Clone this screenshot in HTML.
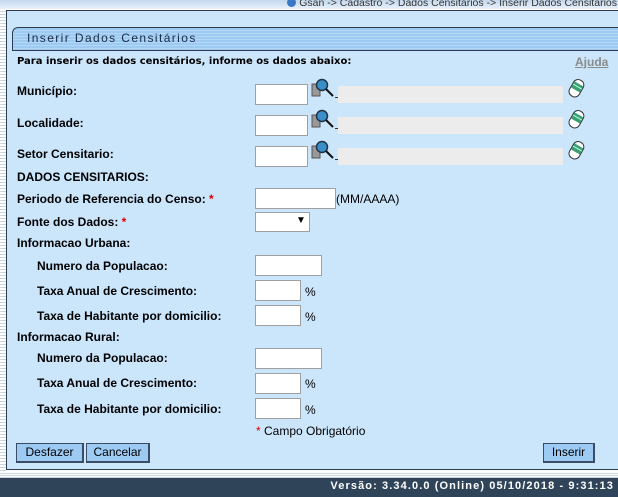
<!DOCTYPE html>
<html><head><meta charset="utf-8"><style>
*{margin:0;padding:0;box-sizing:border-box}
body{width:618px;height:497px;overflow:hidden;background:#fff;font-family:"Liberation Sans",Arial,sans-serif;font-size:12px;position:relative;color:#000}
.a{position:absolute;white-space:nowrap}
.lb{font-weight:bold;font-size:12px}
.in{position:absolute;background:#fff;border:1px solid #a0a0a0;height:21px}
.g{position:absolute;background:#ececec;height:17px}
.r{color:#d00}
.btn{position:absolute;top:443px;height:20px;background:#9ccaf3;border:1px solid #3a4c66;border-right-width:2px;border-bottom-width:2px;font-size:12px;text-align:center;line-height:17px}
</style></head><body>
<div class="a" style="left:0;top:0;width:618px;height:9px;background:linear-gradient(#c3d8ee,#e9f1fa)"></div>
<div class="a" style="left:0;top:9px;width:6px;height:462px;background:repeating-linear-gradient(#fff 0 2px,#c8d4e2 2px 3px)"></div>
<div class="a" style="right:1px;top:-3px;font-size:10.5px;color:#333"><span style="display:inline-block;width:9px;height:9px;border-radius:50%;background:#3a78c8;vertical-align:-1px"></span> Gsan -&gt; Cadastro -&gt; Dados Censitarios -&gt; Inserir Dados Censitarios</div>
<div class="a" style="left:6px;top:10px;width:614px;height:460px;background:#cbe5fb;border:1px solid #2e3c52"></div>
<div class="a" style="left:12px;top:27px;width:608px;height:24px;background:repeating-linear-gradient(#9dcaf2 0 2px,#b4d7f6 2px 3px);border:1px solid #2e3c52;border-radius:6px 0 0 0"></div>
<div class="a" style="left:27px;top:31px;font-size:12px;letter-spacing:1.4px;color:#1a2a44">Inserir Dados Censitários</div>
<div class="a lb" style="left:17px;top:56px;font-family:'DejaVu Sans',sans-serif;font-size:10px">Para inserir os dados censitários, informe os dados abaixo:</div>
<div class="a" style="left:575px;top:55px;font-weight:bold;color:#8a8a8a;text-decoration:underline">Ajuda</div>

<div class="a lb" style="left:17px;top:84px">Município:</div>
<div class="a lb" style="left:17px;top:116px">Localidade:</div>
<div class="a lb" style="left:17px;top:147px">Setor Censitario:</div>
<div class="in" style="left:255px;top:84px;width:53px"></div>
<div class="in" style="left:255px;top:115px;width:53px"></div>
<div class="in" style="left:255px;top:146px;width:53px"></div>
<div class="g" style="left:338px;top:86px;width:225px"></div>
<div class="g" style="left:338px;top:117px;width:225px"></div>
<div class="g" style="left:338px;top:148px;width:225px"></div>
<svg class="a" style="left:311px;top:78px" width="27" height="90">
<g id="m"><rect x="1" y="6" width="8" height="12" fill="#999" stroke="#555"/><circle cx="11" cy="7" r="5.5" fill="#3a8fc8" stroke="#234" stroke-width="1.5"/><line x1="15" y1="11" x2="22" y2="18" stroke="#111" stroke-width="2"/><rect x="24" y="19" width="3" height="1" fill="#333"/></g>
<use href="#m" y="31"/><use href="#m" y="62"/></svg>
<svg class="a" style="left:566px;top:77px" width="22" height="85">
<g id="e"><g transform="rotate(30 10 11)"><rect x="5" y="2" width="11" height="18" rx="5" fill="#fff" stroke="#333"/><rect x="5.5" y="6" width="10" height="7" fill="#3aa070"/><line x1="5.5" y1="9" x2="15.5" y2="9" stroke="#bfe" /></g></g>
<use href="#e" y="31"/><use href="#e" y="62"/></svg>

<div class="a lb" style="left:17px;top:170px">DADOS CENSITARIOS:</div>
<div class="a lb" style="left:17px;top:192px">Periodo de Referencia do Censo: <span class="r">*</span></div>
<div class="in" style="left:255px;top:188px;width:81px"></div>
<div class="a" style="left:336px;top:192px">(MM/AAAA)</div>
<div class="a lb" style="left:17px;top:215px">Fonte dos Dados: <span class="r">*</span></div>
<div class="in" style="left:255px;top:212px;width:55px;height:20px"><span style="position:absolute;left:40px;top:2px;font-size:10px">▼</span></div>
<div class="a lb" style="left:17px;top:236px">Informacao Urbana:</div>
<div class="a lb" style="left:37px;top:259px">Numero da Populacao:</div>
<div class="in" style="left:255px;top:255px;width:67px"></div>
<div class="a lb" style="left:37px;top:284px">Taxa Anual de Crescimento:</div>
<div class="in" style="left:255px;top:280px;width:46px"></div><div class="a" style="left:305px;top:285px">%</div>
<div class="a lb" style="left:37px;top:309px">Taxa de Habitante por domicilio:</div>
<div class="in" style="left:255px;top:305px;width:46px"></div><div class="a" style="left:305px;top:310px">%</div>
<div class="a lb" style="left:17px;top:330px">Informacao Rural:</div>
<div class="a lb" style="left:37px;top:351px">Numero da Populacao:</div>
<div class="in" style="left:255px;top:348px;width:67px"></div>
<div class="a lb" style="left:37px;top:376px">Taxa Anual de Crescimento:</div>
<div class="in" style="left:255px;top:373px;width:46px"></div><div class="a" style="left:305px;top:377px">%</div>
<div class="a lb" style="left:37px;top:402px">Taxa de Habitante por domicilio:</div>
<div class="in" style="left:255px;top:398px;width:46px"></div><div class="a" style="left:305px;top:403px">%</div>
<div class="a" style="left:256px;top:424px"><span class="r">*</span> Campo Obrigatório</div>
<div class="btn" style="left:16px;width:68px">Desfazer</div>
<div class="btn" style="left:86px;width:64px">Cancelar</div>
<div class="btn" style="left:543px;width:52px">Inserir</div>
<div class="a" style="left:0;top:472px;width:618px;height:6px;background:repeating-linear-gradient(#fff 0 1px,#ccd6e2 1px 2px)"></div>
<div class="a" style="left:0;top:478px;width:618px;height:19px;background:#2f4359"></div>
<div class="a" style="right:4px;top:480px;color:#fff;font-weight:bold;font-size:11px;letter-spacing:1.1px">Versão: 3.34.0.0 (Online) 05/10/2018 - 9:31:13</div>
</body></html>
